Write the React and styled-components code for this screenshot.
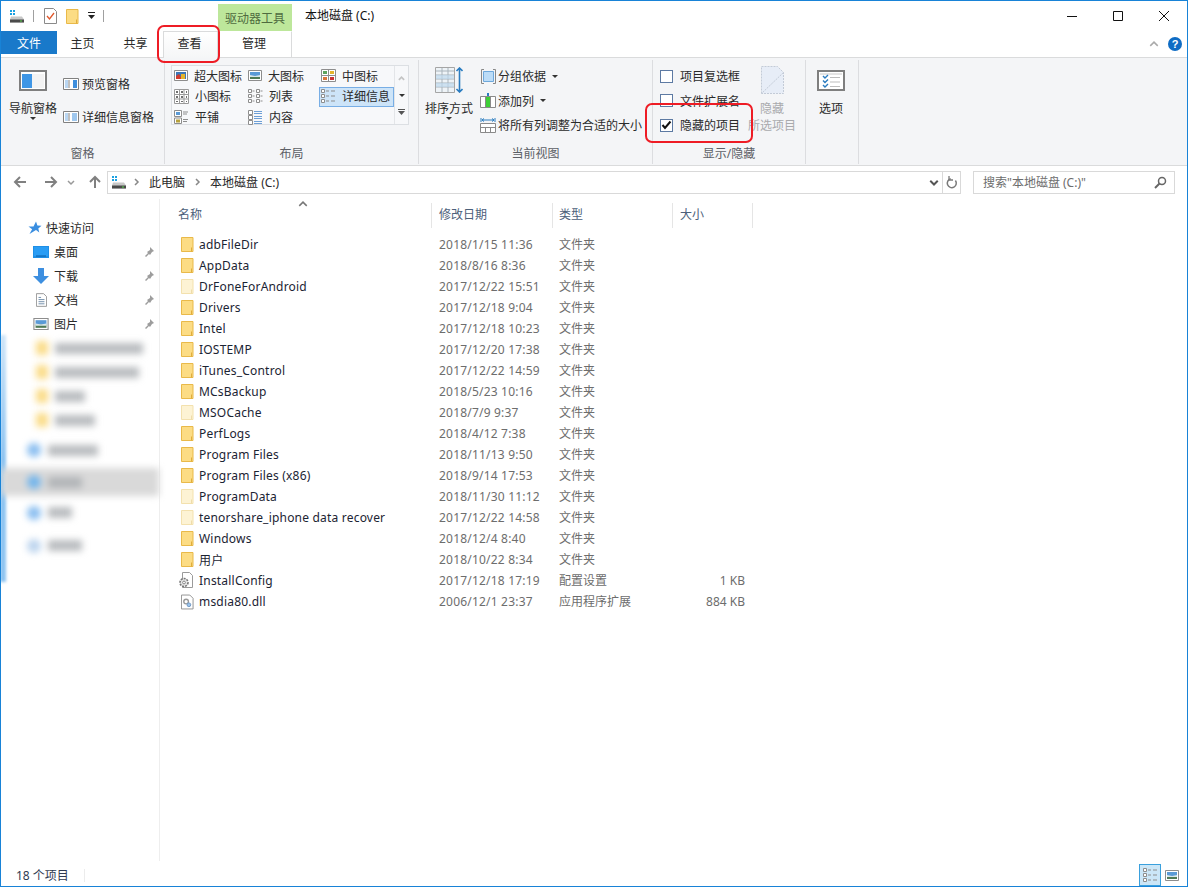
import React from "react";
import styled, { createGlobalStyle } from "styled-components";

const GlobalStyle = createGlobalStyle`
  html, body {
    margin: 0;
    padding: 0;
    background: #fff;
  }
  body {
    font-family: "Noto Sans", "Noto Sans CJK SC", sans-serif;
    font-size: 12px;
    color: #1e1e1e;
  }
`;

const Frame = styled.div`
  position: relative;
  box-sizing: border-box;
  width: 1188px;
  height: 887px;
  border: 1px solid #1883d7;
  display: flex;
  flex-direction: column;
  overflow: hidden;
  background: #fff;
`;

const TitleBar = styled.div`
  height: 30px;
  display: flex;
  flex: none;
`;

const Qat = styled.div`
  width: 217px;
  display: flex;
  align-items: center;
  padding-left: 8px;
  box-sizing: border-box;
`;

const QatSep = styled.span`
  width: 1px;
  height: 12px;
  background: #a0a0a0;
  margin: 0 ${({ $gap }) => $gap || 8}px;
`;

const QatGap = styled.span`
  width: ${({ $w }) => $w}px;
  flex: none;
`;

const ContextTab = styled.div`
  width: 74px;
  height: 27px;
  align-self: flex-end;
  background: #bde79b;
  color: #4f6b3f;
  display: flex;
  align-items: center;
  justify-content: center;
`;

const Title = styled.div`
  margin-left: 13px;
  flex: 1;
  line-height: 29px;
  color: #111;
`;

const WinBtn = styled.div`
  width: 46px;
  height: 30px;
  display: flex;
  align-items: center;
  justify-content: center;
`;

const TabRow = styled.div`
  height: 26px;
  display: flex;
  flex: none;
  align-items: flex-start;
`;

const FileTab = styled.div`
  width: 56px;
  height: 23px;
  background: #1979ca;
  color: #fff;
  display: flex;
  align-items: center;
  justify-content: center;
`;

const Tab = styled.div`
  position: relative;
  z-index: 1;
  box-sizing: border-box;
  width: ${({ $w }) => $w}px;
  height: ${({ $active }) => ($active ? 27 : 26)}px;
  display: flex;
  align-items: center;
  justify-content: center;
  padding: 0 2px ${({ $active }) => ($active ? 5 : 4)}px 0;
  color: #2a2a2a;
  border: 1px solid transparent;
  border-bottom: none;
  ${({ $active }) =>
    $active &&
    `border-color: #dadbdc;
     background: linear-gradient(#ffffff, #f5f6f7);`}
  ${({ $edge }) => $edge && `border-right-color: #dadbdc;`}
`;

const TabSpacer = styled.div`
  flex: 1;
`;

const HelpArea = styled.div`
  display: flex;
  align-items: center;
  gap: 9px;
  height: 26px;
  padding-right: 5px;
`;

const Help = styled.div`
  width: 14px;
  height: 14px;
  border-radius: 50%;
  background: #0f6cc4;
  color: #fff;
  font: bold 11px/14px "Liberation Sans", sans-serif;
  text-align: center;
`;

const Ribbon = styled.div`
  height: 109px;
  flex: none;
  box-sizing: border-box;
  display: flex;
  background: #f4f5f7;
  border-top: 1px solid #dadbdc;
  border-bottom: 1px solid #dadbdc;
`;

const Group = styled.div`
  width: ${({ $w }) => $w}px;
  box-sizing: border-box;
  flex: none;
  display: flex;
  flex-direction: column;
  margin: 2px 0 1px;
  border-right: 1px solid #dcdde0;
`;

const GroupBody = styled.div`
  flex: 1;
  display: flex;
  min-height: 0;
`;

const GroupLabel = styled.div`
  height: 20px;
  line-height: 20px;
  text-align: center;
  color: #5c5f66;
`;

const BigButton = styled.div`
  width: ${({ $w }) => $w}px;
  margin-left: ${({ $left }) => $left}px;
  flex: none;
  padding-top: 5px;
  display: flex;
  flex-direction: column;
  align-items: center;
  color: #2a2a2a;
  white-space: nowrap;
`;

const BigIcon = styled.div`
  height: 30px;
  display: flex;
  align-items: center;
  justify-content: center;
`;

const BigLabel = styled.div`
  margin-top: 5px;
  height: 17px;
  line-height: 17px;
`;

const SubLabel = styled.div`
  height: 17px;
  line-height: 17px;
`;

const Caret = styled.span`
  display: inline-block;
  width: 0;
  height: 0;
  border-left: 3px solid transparent;
  border-right: 3px solid transparent;
  border-top: 3px solid #333;
  margin-left: ${({ $left }) => $left || 0}px;
`;

const SmallStack = styled.div`
  padding-top: ${({ $top }) => $top}px;
  margin-left: ${({ $left }) => $left}px;
  display: flex;
  flex-direction: column;
  gap: ${({ $gap }) => $gap}px;
`;

const SmallRow = styled.div`
  height: ${({ $h }) => $h}px;
  display: flex;
  align-items: center;
  white-space: nowrap;
  color: #2a2a2a;
`;

const SmallIcon = styled.span`
  width: 16px;
  height: 16px;
  margin-right: ${({ $gap }) => $gap || 3}px;
  display: flex;
  align-items: center;
  justify-content: center;
  flex: none;
`;

const Gallery = styled.div`
  margin: 5px 0 0 6px;
  width: 238px;
  height: 60px;
  box-sizing: border-box;
  border: 1px solid #dcdfe3;
  background: #f7f8fa;
  display: flex;
`;

const GalleryGrid = styled.div`
  width: 222px;
  display: grid;
  grid-template-columns: 74px 73px 75px;
  grid-auto-rows: 20.67px;
`;

const GalleryItem = styled.div`
  box-sizing: border-box;
  display: flex;
  align-items: center;
  gap: 6px;
  padding: 0 0 1px 1px;
  white-space: nowrap;
  color: #2a2a2a;
  border: 1px solid ${({ $on }) => ($on ? "#78aee5" : "transparent")};
  background: ${({ $on }) => ($on ? "#cde4f8" : "transparent")};
`;

const GalleryScroll = styled.div`
  flex: 1;
  border-left: 1px solid #e3e5e8;
  display: flex;
  flex-direction: column;
  align-items: center;
  justify-content: space-around;
  padding: 3px 0;
`;

const CheckRow = styled(SmallRow)`
  gap: 7px;
`;

const Box = styled.span`
  box-sizing: border-box;
  width: 13px;
  height: 13px;
  background: #fff;
  border: 1px solid #5d7aa3;
  display: flex;
  align-items: center;
  justify-content: center;
`;

const DimStack = styled.div`
  margin-left: 2px;
  width: 60px;
  padding-top: 5px;
  display: flex;
  flex-direction: column;
  align-items: center;
  color: #a9aaad;
  white-space: nowrap;
`;

const AddressRow = styled.div`
  height: 33px;
  flex: none;
  display: flex;
  align-items: center;
  box-sizing: border-box;
  padding: 0 0 1px 12px;
`;

const NavBtn = styled.span`
  width: ${({ $w }) => $w}px;
  margin-left: ${({ $left }) => $left || 0}px;
  height: 22px;
  display: flex;
  align-items: center;
  justify-content: center;
  flex: none;
`;

const AddressBox = styled.div`
  margin-left: 5px;
  width: 854px;
  height: 23px;
  box-sizing: border-box;
  border: 1px solid #d9d9d9;
  display: flex;
  align-items: center;
  padding-left: 3px;
`;

const Crumb = styled.span`
  margin-left: ${({ $left }) => $left}px;
  display: flex;
  color: #2a2a2a;
  white-space: nowrap;
`;

const AddressEnd = styled.div`
  margin-left: auto;
  height: 100%;
  display: flex;
  align-items: center;
`;

const RefreshCell = styled.span`
  width: 17px;
  height: 100%;
  border-left: 1px solid #d9d9d9;
  display: flex;
  align-items: center;
  justify-content: center;
`;

const SearchBox = styled.div`
  margin-left: 12px;
  width: 202px;
  height: 23px;
  box-sizing: border-box;
  border: 1px solid #d9d9d9;
  display: flex;
  align-items: center;
  justify-content: space-between;
  padding: 0 7px 0 9px;
  color: #6d6d6d;
`;

const Main = styled.div`
  flex: 1;
  min-height: 0;
  display: flex;
`;

const Sidebar = styled.nav`
  position: relative;
  width: 159px;
  flex: none;
  box-sizing: border-box;
  border-right: 1px solid #eeeeee;
  padding-top: 17px;
  margin-bottom: 3px;
`;

const BlurStrip = styled.div`
  position: absolute;
  left: -1px;
  top: 136px;
  width: 6px;
  height: 247px;
  background: linear-gradient(#cfe5f8, #8cc3f1 50%, #8cc3f1);
  filter: blur(1.5px);
`;

const QuickRow = styled.div`
  height: 24px;
  display: flex;
  align-items: center;
  padding-left: 27px;
  gap: 4px;
  color: #2a2a2a;
`;

const NavRow = styled.div`
  height: 24px;
  display: flex;
  align-items: center;
  padding-left: 32px;
  gap: 5px;
  color: #2a2a2a;
`;

const NavIcon = styled.span`
  width: 16px;
  display: flex;
  justify-content: center;
  flex: none;
`;

const NavName = styled.span`
  flex: 1;
`;

const Pin = styled.span`
  width: 12px;
  height: 12px;
  margin-right: 4px;
  display: flex;
`;

const BlurRow = styled.div`
  height: ${({ $h }) => $h}px;
  display: flex;
  align-items: center;
  padding-left: ${({ $left }) => $left}px;
  gap: 7px;
  background: ${({ $selected }) => ($selected ? "#d9d9d9" : "transparent")};
  filter: blur(3.5px);
`;

const BlurDot = styled.span`
  width: ${({ $w }) => $w || 12}px;
  height: 14px;
  border-radius: ${({ $round }) => ($round ? "50%" : "1px")};
  background: ${({ $c }) => $c};
  flex: none;
`;

const BlurBar = styled.span`
  width: ${({ $w }) => $w}px;
  height: 11px;
  background: #a8abaf;
  opacity: 0.8;
`;

const ListPane = styled.section`
  flex: 1;
  position: relative;
  padding-left: 18px;
`;

const SortMark = styled.span`
  position: absolute;
  left: 138px;
  top: 0;
  display: flex;
`;

const HeaderRow = styled.div`
  height: 25px;
  display: flex;
  margin-top: 4px;
  margin-bottom: 6px;
  color: #4c607a;
`;

const HeaderCell = styled.div`
  width: ${({ $w }) => $w}px;
  box-sizing: border-box;
  padding-left: ${({ $pad }) => $pad}px;
  line-height: 24px;
  border-right: 1px solid #e5e5e5;
`;

const FileRow = styled.div`
  height: 21px;
  display: flex;
  align-items: center;
`;

const NameCell = styled.div`
  width: 261px;
  box-sizing: border-box;
  padding-left: 3px;
  display: flex;
  align-items: center;
  gap: 5px;
  color: #1b2433;
  white-space: nowrap;
  letter-spacing: 0.2px;
`;

const FileIcon = styled.span`
  width: 13px;
  flex: none;
  display: flex;
  justify-content: flex-end;
`;

const DateCell = styled.div`
  width: 120px;
  color: #6d6d6d;
  letter-spacing: 0.2px;
`;

const TypeCell = styled.div`
  width: 121px;
  color: #6d6d6d;
  position: relative;
  top: -1px;
`;

const SizeCell = styled.div`
  width: 65px;
  text-align: right;
  color: #6d6d6d;
`;

const StatusBar = styled.div`
  height: 22px;
  flex: none;
  display: flex;
  align-items: center;
  padding-left: 15px;
  color: #2f3b52;
`;

const StatusSep = styled.span`
  width: 1px;
  height: 13px;
  background: #ececec;
  margin-left: 15px;
`;

const ViewBtns = styled.div`
  margin-left: auto;
  display: flex;
  align-items: center;
  gap: 4px;
  padding-right: 8px;
  height: 100%;
`;

const ViewBtn = styled.span`
  box-sizing: border-box;
  width: ${({ $on }) => ($on ? 22 : 14)}px;
  height: 22px;
  display: flex;
  align-items: center;
  justify-content: center;
  ${({ $on }) => $on && "border: 1px solid #3aa0dd; background: #cbe6f7;"}
`;

const Callout = styled.div`
  position: absolute;
  left: ${({ $x }) => $x}px;
  top: ${({ $y }) => $y}px;
  width: ${({ $w }) => $w}px;
  height: ${({ $h }) => $h}px;
  box-sizing: border-box;
  border: 2px solid #ee1c25;
  border-radius: 7px;
  z-index: 5;
`;

const Folder = ({ pale }) => (
  <svg width="13" height="15" viewBox="0 0 13 15">
    <path
      d="M.5.5h11.5v14H.5z"
      fill={pale ? "#fdf3d4" : "#fcdc84"}
      stroke={pale ? "#f3e1ae" : "#e9b949"}
    />
    <path d="M10.5 10.5v4" stroke={pale ? "#eedcaa" : "#e0ad3c"} fill="none" />
  </svg>
);

const DriveIcon = () => (
  <svg width="16" height="14" viewBox="0 0 16 14" style={{ flex: "none" }}>
    <path d="M1 1h2v2H1zM4 1h2v2H4zM1 4h2v2H1zM4 4h2v2H4z" fill="#1ba1e2" />
    <path d="M2 7.5h11l2 3v3H1v-3z" fill="#c8c8c8" />
    <path d="M1 10.5h14v3H1z" fill="#4a4a4a" />
    <path d="M11 11.5h2v1h-2z" fill="#59d64b" />
  </svg>
);

const CheckDoc = () => (
  <svg width="13" height="16" viewBox="0 0 13 16">
    <path d="M.5.5h9l3 3v12H.5z" fill="#fff" stroke="#8a8a8a" />
    <path d="M3 8l2.5 3L10 5" fill="none" stroke="#e0562a" strokeWidth="1.3" />
  </svg>
);

const Gear = () => (
  <svg width="16" height="17" viewBox="0 0 16 17" style={{ flex: "none" }}>
    <path d="M4.5.5h7l3 3v12h-10z" fill="#fff" stroke="#9a9a9a" />
    <circle cx="6" cy="10.5" r="4" fill="#e8e8e8" stroke="#777" strokeWidth="1.6" strokeDasharray="2 1" />
    <circle cx="6" cy="10.5" r="1.4" fill="#fff" stroke="#888" />
  </svg>
);

const Dll = () => (
  <svg width="13" height="16" viewBox="0 0 14 16">
    <path d="M.5.5h9l3.5 3.5v11.500H.5z" fill="#fff" stroke="#8f8f8f" />
    <circle cx="5.500" cy="7.500" r="2.500" fill="none" stroke="#999" strokeWidth="1.500" />
    <circle cx="8.500" cy="11" r="2" fill="#9cc4ea" stroke="#6d96c4" />
  </svg>
);

const NavPaneIcon = () => (
  <svg width="28" height="21" viewBox="0 0 28 21">
    <path d="M1 1h26v19H1z" fill="#fff" stroke="#7f7f7f" strokeWidth="2" />
    <path d="M3 4h10v14H3z" fill="#3f96e5" />
    <path d="M13 4h12v14H13z" fill="#f3f3f3" />
  </svg>
);

const PreviewIcon = () => (
  <svg width="16" height="12" viewBox="0 0 16 12">
    <path d="M.5.5h15v11H.5z" fill="#fff" stroke="#808080" />
    <path d="M2 2h3v8H2z" fill="#b9d6f2" />
    <path d="M6 2v8" stroke="#808080" />
    <path d="M10 2h4v8h-4z" fill="#3f8fdd" />
  </svg>
);

const DetailPaneIcon = () => (
  <svg width="16" height="12" viewBox="0 0 16 12">
    <path d="M.5.5h15v11H.5z" fill="#fff" stroke="#808080" />
    <path d="M2 2h3v8H2z" fill="#b9d6f2" />
    <path d="M6 2v8" stroke="#808080" />
    <path d="M9 3h5M9 5h5M9 7h5M9 9h5" stroke="#3f8fdd" />
  </svg>
);

const Picture = ({ w = 14, h = 11 }) => (
  <svg width={w} height={h} viewBox="0 0 14 11">
    <path d="M.5.5h13v10H.5z" fill="#fff" stroke="#8d8d8d" />
    <path d="M2 2h10v4H2z" fill="#5a9ad6" />
    <path d="M2 6h10v3H2z" fill="#4f7a55" />
    <path d="M2 5l5 1 5-1v2H2z" fill="#d9e6e8" />
  </svg>
);

const ExtraLargeIcon = () => (
  <svg width="14" height="11" viewBox="0 0 14 11">
    <path d="M.5.5h13v10H.5z" fill="#fff" stroke="#8d8d8d" />
    <path d="M2 2h10v7H2z" fill="#3c77b8" />
    <path d="M2 6l3-2 3 5H2z" fill="#d23b2e" />
    <path d="M7 4h4v5H7z" fill="#e4b42b" />
  </svg>
);

const MediumIcon = () => (
  <svg width="15" height="13" viewBox="0 0 15 13">
    <path d="M.5.5h14v12H.5zM7.500.5v12M.5 6.500h14" fill="#fff" stroke="#8d8d8d" />
    <path d="M2 2h4v3H2z" fill="#5ea35e" />
    <path d="M9 2h4v3H9z" fill="#e4b42b" />
    <path d="M2 8h4v3H2z" fill="#d9743a" />
    <path d="M9 8h4v3H9z" fill="#c33" />
  </svg>
);

const SmallGridIcon = () => (
  <svg width="15" height="15" viewBox="0 0 15 15">
    <path d="M.5.5h14v14H.5zM5.500.5v14M10 .5v14M.5 5.500h14M.5 10h14" fill="#fff" stroke="#9a9a9a" />
    <path d="M2 2h2v2H2zM7 2h2v2H7zM12 2h1v2h-1zM2 7h2v2H2zM7 7h2v2H7zM12 7h1v2h-1zM2 12h2v1H2zM7 12h2v1H7zM12 12h1v1h-1z" fill="#6f6f6f" />
  </svg>
);

const ListIcon = () => (
  <svg width="15" height="14" viewBox="0 0 15 14">
    <path d="M.5.5h3v3h-3zM.5 5.500h3v3h-3zM.5 10.500h3v3h-3zM8.500.5h3v3h-3zM8.500 5.500h3v3h-3zM8.500 10.500h3v3h-3z" fill="#fff" stroke="#8d8d8d" />
    <path d="M4.500 2h2M4.500 7h2M4.500 12h2M12.500 2h2M12.500 7h2M12.500 12h2" stroke="#8d8d8d" />
  </svg>
);

const DetailsIcon = () => (
  <svg width="15" height="14" viewBox="0 0 15 14">
    <path d="M.5.5h3v3h-3zM.5 5.500h3v3h-3zM.5 10.500h3v3h-3z" fill="#fff" stroke="#8d8d8d" />
    <path d="M5 2h3M10 2h4M5 7h3M10 7h4M5 12h3M10 12h4" stroke="#8d8d8d" />
  </svg>
);

const TilesIcon = () => (
  <svg width="15" height="14" viewBox="0 0 15 14">
    <path d="M.5.5h7v6h-7zM.5 8h7v5.500h-7z" fill="#fff" stroke="#8d8d8d" />
    <path d="M2 2h4v3H2z" fill="#5a9ad6" />
    <path d="M2 9.500h4v3H2z" fill="#b7a13c" />
    <path d="M9 2h5M9 4h4M9 9.500h5M9 11.500h4" stroke="#8d8d8d" />
  </svg>
);

const ContentIcon = () => (
  <svg width="15" height="15" viewBox="0 0 15 15">
    <path d="M.5.5h4v4h-4zM.5 5.500h4v4h-4zM.5 10.500h4v4h-4z" fill="#fff" stroke="#8d8d8d" />
    <path d="M6 1.500h8M6 3.500h8M6 6.500h8M6 8.500h8M6 11.500h8M6 13.500h8" stroke="#6d9fd6" />
  </svg>
);

const SortIcon = () => (
  <svg width="28" height="26" viewBox="0 0 28 26">
    <path d="M.5.5h19v25H.5z" fill="#eef3f7" stroke="#a5a5a5" />
    <path d="M1 4h18M1 8h18M1 12h18M1 16h18M1 20h18M7 1v24M13 1v24" stroke="#a9b4bc" />
    <path d="M1 8h18v4H1zM1 16h18v4H1z" fill="#bfd9ec" opacity=".7" />
    <path d="M24.500 1v24M21.500 4l3-3 3 3M21.500 22l3 3 3-3" fill="none" stroke="#2a7cc0" strokeWidth="1.600" />
  </svg>
);

const GroupByIcon = () => (
  <svg width="15" height="15" viewBox="0 0 15 15">
    <path d="M3 .5H.5v14H3M12 .5h2.500v14H12" fill="none" stroke="#888" />
    <path d="M2.500 2.500h10v10h-10z" fill="#bcdcf7" stroke="#6ea8db" />
  </svg>
);

const AddColumnIcon = () => (
  <svg width="16" height="15" viewBox="0 0 16 15">
    <path d="M.5 3.500h15v11H.5zM5.500 3.500v11M10.500 3.500v11" fill="#fff" stroke="#8a8a8a" />
    <path d="M6 4h4v10H6z" fill="#3ecf37" />
    <path d="M8 0v3" stroke="#2a7cc0" strokeWidth="2" />
  </svg>
);

const FitColumnsIcon = () => (
  <svg width="16" height="16" viewBox="0 0 16 16">
    <path d="M.5 6.500h15v9H.5zM.5 10.500h15M5.500 10.500v5M10.500 10.500v5" fill="#fff" stroke="#8a8a8a" />
    <path d="M1 1v4M15 1v4M2 3h12M4 1.500L2 3l2 1.500M12 1.500L14 3l-2 1.500" fill="none" stroke="#2a7cc0" />
  </svg>
);

const HideIcon = () => (
  <svg width="23" height="28" viewBox="0 0 23 28">
    <path d="M.5.5h16l6 6v21H.5z" fill="#e7edf7" />
    <path d="M.5 27.500V.5h16l6 6v21h-22L22.500 6.500" fill="none" stroke="#c3cbd7" strokeDasharray="2 1" />
  </svg>
);

const OptionsIcon = () => (
  <svg width="28" height="21" viewBox="0 0 28 21">
    <path d="M1 1h26v19H1z" fill="#fff" stroke="#7f7f7f" strokeWidth="2" />
    <path d="M3 4h22" stroke="#c8c8c8" />
    <path d="M6 6l2 2 3-3M6 10.500l2 2 3-3M6 15l2 2 3-3" fill="none" stroke="#2a7cc0" strokeWidth="1.400" />
    <path d="M13 7.500h10M13 12h10M13 16.500h10" stroke="#bdbdbd" />
  </svg>
);

const Chevron = ({ dir = "down", c = "#666", s = 8, w = 1.2 }) => {
  const d = {
    down: "M1 3l3 3 3-3",
    up: "M1 5.500l3-3 3 3",
    right: "M3 1l3 3-3 3",
  }[dir];
  return (
    <svg width={s} height={s} viewBox="0 0 8 8">
      <path d={d} fill="none" stroke={c} strokeWidth={w} />
    </svg>
  );
};

const Arrow = ({ dir, c }) => {
  const d = {
    left: "M13 7H2M7 2L2 7l5 5",
    right: "M1 7h11M7 2l5 5-5 5",
    up: "M7 13V2M2 7l5-5 5 5",
  }[dir];
  return (
    <svg width="14" height="14" viewBox="0 0 14 14">
      <path d={d} fill="none" stroke={c} strokeWidth="2" />
    </svg>
  );
};

const PinIcon = () => (
  <svg width="12" height="12" viewBox="0 0 12 12">
    <path d="M7 1l4 4-2 1-2 3-1-1-3 3-1-1 3-3-1-1 3-2z" fill="#9d9d9d" />
  </svg>
);

const StarIcon = () => (
  <svg width="14" height="14" viewBox="0 0 14 14">
    <path d="M8 .5l1.400 4 4.100.3-3.200 2.600 1 4-3.300-2.300L1.500 13l2.600-4.700L.5 5.500l5 .1z" fill="#3a8ee0" />
  </svg>
);

const DesktopIcon = () => (
  <svg width="16" height="12" viewBox="0 0 16 12">
    <path d="M0 0h16v12H0z" fill="#1f8fe6" />
    <path d="M1 1h14v9H1z" fill="#2a9df4" />
    <path d="M3 10h10" stroke="#0b5ea8" />
  </svg>
);

const DownloadIcon = () => (
  <svg width="16" height="16" viewBox="0 0 16 16">
    <path d="M5 0h6v8h5l-8 8-8-8h5z" fill="#3d8fe0" />
  </svg>
);

const DocIcon = () => (
  <svg width="11" height="16" viewBox="0 0 13 16">
    <path d="M.5.5h8.500l3.500 3.500v11.500H.5z" fill="#fff" stroke="#8a8a8a" />
    <path d="M3 5h3M3 7.500h7M3 10h7M3 12.500h7" stroke="#5f7f9f" />
  </svg>
);

const SearchIcon = () => (
  <svg width="13" height="13" viewBox="0 0 13 13">
    <circle cx="8" cy="5" r="3.500" fill="none" stroke="#666" strokeWidth="1.500" />
    <path d="M5.500 7.500L1 12" stroke="#666" strokeWidth="2" />
  </svg>
);

const RefreshIcon = () => (
  <svg width="12" height="13" viewBox="0 0 12 13">
    <path d="M3 3.500a4.500 4.500 0 1 0 5 0" fill="none" stroke="#7a7a7a" strokeWidth="1.500" transform="rotate(20 6 8)" />
    <path d="M3 0v4h4" fill="none" stroke="#7a7a7a" strokeWidth="1.300" />
  </svg>
);

const gallery = [
  ["超大图标", <ExtraLargeIcon />],
  ["大图标", <Picture />],
  ["中图标", <MediumIcon />],
  ["小图标", <SmallGridIcon />],
  ["列表", <ListIcon />],
  ["详细信息", <DetailsIcon />],
  ["平铺", <TilesIcon />],
  ["内容", <ContentIcon />],
];

const quickLinks = [
  ["桌面", <DesktopIcon />],
  ["下载", <DownloadIcon />],
  ["文档", <DocIcon />],
  ["图片", <Picture w={16} h={12} />],
];

const files = [
  ["adbFileDir", "2018/1/15 11:36", "文件夹", ""],
  ["AppData", "2018/8/16 8:36", "文件夹", ""],
  ["DrFoneForAndroid", "2017/12/22 15:51", "文件夹", "", "pale"],
  ["Drivers", "2017/12/18 9:04", "文件夹", ""],
  ["Intel", "2017/12/18 10:23", "文件夹", ""],
  ["IOSTEMP", "2017/12/20 17:38", "文件夹", ""],
  ["iTunes_Control", "2017/12/22 14:59", "文件夹", ""],
  ["MCsBackup", "2018/5/23 10:16", "文件夹", ""],
  ["MSOCache", "2018/7/9 9:37", "文件夹", "", "pale"],
  ["PerfLogs", "2018/4/12 7:38", "文件夹", ""],
  ["Program Files", "2018/11/13 9:50", "文件夹", ""],
  ["Program Files (x86)", "2018/9/14 17:53", "文件夹", ""],
  ["ProgramData", "2018/11/30 11:12", "文件夹", "", "pale"],
  ["tenorshare_iphone data recover", "2017/12/22 14:58", "文件夹", "", "pale"],
  ["Windows", "2018/12/4 8:40", "文件夹", ""],
  ["用户", "2018/10/22 8:34", "文件夹", ""],
  ["InstallConfig", "2017/12/18 17:19", "配置设置", "1 KB", "gear"],
  ["msdia80.dll", "2006/12/1 23:37", "应用程序扩展", "884 KB", "dll"],
];

function fileIcon(kind) {
  if (kind === "gear") return <Gear />;
  if (kind === "dll") return <Dll />;
  return <Folder pale={kind === "pale"} />;
}

export default function App() {
  return (
    <Frame>
      <GlobalStyle />
      <TitleBar>
        <Qat>
          <DriveIcon />
          <QatSep />
          <QatGap $w={2} />
          <CheckDoc />
          <QatGap $w={9} />
          <Folder />
          <QatGap $w={8} />
          <svg width="9" height="8" viewBox="0 0 9 8">
            <path d="M1 0h7v1H1zM1 3h7L4.500 7z" fill="#222" />
          </svg>
          <QatSep $gap={7} />
        </Qat>
        <ContextTab>驱动器工具</ContextTab>
        <Title>本地磁盘 (C:)</Title>
        <WinBtn>
          <svg width="10" height="10" viewBox="0 0 10 10">
            <path d="M0 5.500h10" stroke="#111" />
          </svg>
        </WinBtn>
        <WinBtn>
          <svg width="10" height="10" viewBox="0 0 10 10">
            <path d="M.5.5h9v9h-9z" fill="none" stroke="#111" />
          </svg>
        </WinBtn>
        <WinBtn>
          <svg width="10" height="10" viewBox="0 0 10 10">
            <path d="M0 0l10 10M10 0L0 10" stroke="#111" />
          </svg>
        </WinBtn>
      </TitleBar>

      <TabRow>
        <FileTab>文件</FileTab>
        <Tab $w={53}>主页</Tab>
        <Tab $w={53}>共享</Tab>
        <Tab $w={55} $active>
          查看
        </Tab>
        <Tab $w={74} $edge>
          管理
        </Tab>
        <TabSpacer />
        <HelpArea>
          <Chevron dir="up" c="#aaa" s={10} />
          <Help>?</Help>
        </HelpArea>
      </TabRow>

      <Ribbon>
        <Group $w={164}>
          <GroupBody>
            <BigButton $w={50} $left={7}>
              <BigIcon>
                <NavPaneIcon />
              </BigIcon>
              <BigLabel>导航窗格</BigLabel>
              <Caret />
            </BigButton>
            <SmallStack $top={16} $gap={17} $left={5}>
              <SmallRow $h={16}>
                <SmallIcon>
                  <PreviewIcon />
                </SmallIcon>
                预览窗格
              </SmallRow>
              <SmallRow $h={16}>
                <SmallIcon>
                  <DetailPaneIcon />
                </SmallIcon>
                详细信息窗格
              </SmallRow>
            </SmallStack>
          </GroupBody>
          <GroupLabel>窗格</GroupLabel>
        </Group>

        <Group $w={254}>
          <GroupBody>
            <Gallery>
              <GalleryGrid>
                {gallery.map(([label, icon]) => (
                  <GalleryItem key={label} $on={label === "详细信息"}>
                    {icon}
                    {label}
                  </GalleryItem>
                ))}
              </GalleryGrid>
              <GalleryScroll>
                <Chevron dir="up" c="#c4c4c4" s={7} w={2} />
                <Caret />
                <svg width="7" height="6" viewBox="0 0 7 6">
                  <path d="M0 0h7v1H0zM0 2h7L3.500 6z" fill="#555" />
                </svg>
              </GalleryScroll>
            </Gallery>
          </GroupBody>
          <GroupLabel>布局</GroupLabel>
        </Group>

        <Group $w={234}>
          <GroupBody>
            <BigButton $w={50} $left={5}>
              <BigIcon>
                <SortIcon />
              </BigIcon>
              <BigLabel>排序方式</BigLabel>
              <Caret />
            </BigButton>
            <SmallStack $top={4} $gap={0} $left={6}>
              <SmallRow $h={24.5}>
                <SmallIcon $gap={2}>
                  <GroupByIcon />
                </SmallIcon>
                分组依据
                <Caret $left={6} />
              </SmallRow>
              <SmallRow $h={24.5}>
                <SmallIcon $gap={2}>
                  <AddColumnIcon />
                </SmallIcon>
                添加列
                <Caret $left={6} />
              </SmallRow>
              <SmallRow $h={24.5}>
                <SmallIcon $gap={2}>
                  <FitColumnsIcon />
                </SmallIcon>
                将所有列调整为合适的大小
              </SmallRow>
            </SmallStack>
          </GroupBody>
          <GroupLabel>当前视图</GroupLabel>
        </Group>

        <Group $w={153}>
          <GroupBody>
            <SmallStack $top={4} $gap={0} $left={7}>
              <CheckRow $h={24.5}>
                <Box />
                项目复选框
              </CheckRow>
              <CheckRow $h={24.5}>
                <Box />
                文件扩展名
              </CheckRow>
              <CheckRow $h={24.5}>
                <Box>
                  <svg width="11" height="10" viewBox="0 0 11 10">
                    <path d="M1.500 5l2.500 3L9.500 1.500" fill="none" stroke="#111" strokeWidth="2" />
                  </svg>
                </Box>
                隐藏的项目
              </CheckRow>
            </SmallStack>
            <DimStack>
              <BigIcon>
                <HideIcon />
              </BigIcon>
              <BigLabel>隐藏</BigLabel>
              <SubLabel>所选项目</SubLabel>
            </DimStack>
          </GroupBody>
          <GroupLabel>显示/隐藏</GroupLabel>
        </Group>

        <Group $w={53}>
          <GroupBody>
            <BigButton $w={50} $left={0}>
              <BigIcon>
                <OptionsIcon />
              </BigIcon>
              <BigLabel>选项</BigLabel>
            </BigButton>
          </GroupBody>
          <GroupLabel />
        </Group>
      </Ribbon>

      <AddressRow>
        <NavBtn $w={14}>
          <Arrow dir="left" c="#808080" />
        </NavBtn>
        <NavBtn $w={14} $left={17}>
          <Arrow dir="right" c="#808080" />
        </NavBtn>
        <NavBtn $w={26}>
          <Chevron c="#999" w={1.5} />
        </NavBtn>
        <NavBtn $w={14} $left={4}>
          <Arrow dir="up" c="#808080" />
        </NavBtn>
        <AddressBox>
          <DriveIcon />
          <Crumb $left={5}>
            <Chevron dir="right" c="#888" w={1.5} />
          </Crumb>
          <Crumb $left={9}>此电脑</Crumb>
          <Crumb $left={8}>
            <Chevron dir="right" c="#888" w={1.5} />
          </Crumb>
          <Crumb $left={9}>本地磁盘 (C:)</Crumb>
          <AddressEnd>
            <NavBtn $w={16}>
              <Chevron c="#555" w={1.6} s={10} />
            </NavBtn>
            <RefreshCell>
              <RefreshIcon />
            </RefreshCell>
          </AddressEnd>
        </AddressBox>
        <SearchBox>
          搜索"本地磁盘 (C:)"
          <SearchIcon />
        </SearchBox>
      </AddressRow>

      <Main>
        <Sidebar>
          <BlurStrip />
          <QuickRow>
            <StarIcon />
            快速访问
          </QuickRow>
          {quickLinks.map(([name, icon]) => (
            <NavRow key={name}>
              <NavIcon>{icon}</NavIcon>
              <NavName>{name}</NavName>
              <Pin>
                <PinIcon />
              </Pin>
            </NavRow>
          ))}
          <BlurRow $h={24} $left={35}>
            <BlurDot $c="#fbdc88" />
            <BlurBar $w={88} />
          </BlurRow>
          <BlurRow $h={24} $left={35}>
            <BlurDot $c="#fbdc88" />
            <BlurBar $w={84} />
          </BlurRow>
          <BlurRow $h={24} $left={35}>
            <BlurDot $c="#fbdc88" />
            <BlurBar $w={30} />
          </BlurRow>
          <BlurRow $h={24} $left={35}>
            <BlurDot $c="#fbdc88" />
            <BlurBar $w={40} />
          </BlurRow>
          <BlurRow $h={36} $left={26}>
            <BlurDot $c="#88bdf0" $round $w={14} />
            <BlurBar $w={50} />
          </BlurRow>
          <BlurRow $h={28} $left={26} $selected>
            <BlurDot $c="#72b5ec" $round $w={14} />
            <BlurBar $w={34} />
          </BlurRow>
          <BlurRow $h={33} $left={26}>
            <BlurDot $c="#88bdf0" $round $w={14} />
            <BlurBar $w={24} />
          </BlurRow>
          <BlurRow $h={33} $left={26}>
            <BlurDot $c="#bcd4ee" $round $w={14} />
            <BlurBar $w={34} />
          </BlurRow>
        </Sidebar>

        <ListPane>
          <SortMark>
            <Chevron dir="up" c="#777" s={10} />
          </SortMark>
          <HeaderRow>
            <HeaderCell $w={254} $pad={0}>
              名称
            </HeaderCell>
            <HeaderCell $w={121} $pad={7}>
              修改日期
            </HeaderCell>
            <HeaderCell $w={120} $pad={6}>
              类型
            </HeaderCell>
            <HeaderCell $w={80} $pad={7}>
              大小
            </HeaderCell>
          </HeaderRow>
          {files.map(([name, date, type, size, kind]) => (
            <FileRow key={name}>
              <NameCell>
                <FileIcon>{fileIcon(kind)}</FileIcon>
                {name}
              </NameCell>
              <DateCell>{date}</DateCell>
              <TypeCell>{type}</TypeCell>
              <SizeCell>{size}</SizeCell>
            </FileRow>
          ))}
        </ListPane>
      </Main>

      <StatusBar>
        18 个项目
        <StatusSep />
        <ViewBtns>
          <ViewBtn $on>
            <DetailsIcon />
          </ViewBtn>
          <ViewBtn>
            <Picture />
          </ViewBtn>
        </ViewBtns>
      </StatusBar>

      <Callout $x={156} $y={24} $w={63} $h={38} />
      <Callout $x={644} $y={102} $w={108} $h={40} />
    </Frame>
  );
}
